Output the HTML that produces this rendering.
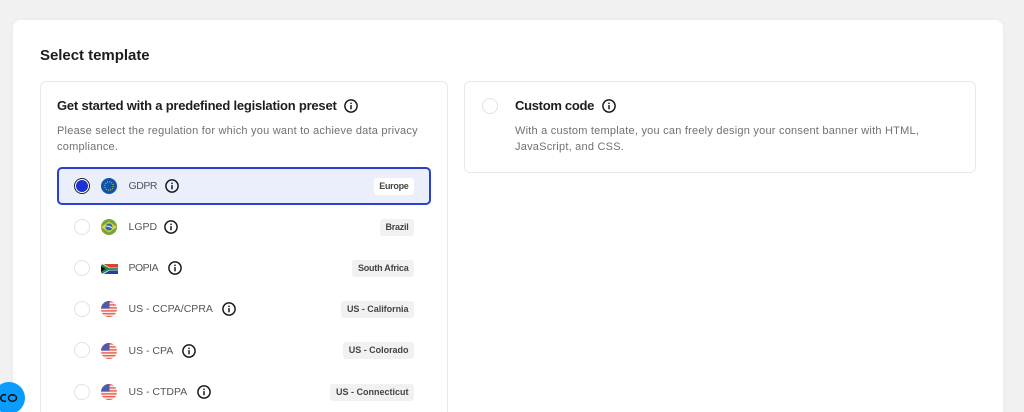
<!DOCTYPE html>
<html><head><meta charset="utf-8"><style>
html,body{margin:0;padding:0;width:1024px;height:412px;overflow:hidden;background:#f1f1f1;font-family:"Liberation Sans",sans-serif;}
#w{position:relative;width:1024px;height:412px;overflow:hidden;background:#f1f1f1}
.a{position:absolute;white-space:nowrap}
.card{left:13px;top:20px;width:990px;height:392px;background:#fff;border-radius:8px 8px 0 0;box-shadow:0 0 5px rgba(0,0,0,.035)}
.panel{background:#fff;border:1px solid #e9e9e9;border-radius:6px;box-sizing:border-box}
.h{font-size:13px;font-weight:bold;color:#1d1d1d;line-height:16px}
.p{font-size:11px;color:#717171;line-height:18px;letter-spacing:.225px}
.l{font-size:10.5px;color:#55555a;left:128.5px;line-height:14px}
.tag{right:610px;height:17px;line-height:17px;background:#f1f1f1;border-radius:3px;padding:0 5.5px;font-size:9px;font-weight:bold;color:#444}
.r{left:74px;width:16px;height:16px;border:1.5px solid #e2e2e2;border-radius:50%;box-sizing:border-box;background:#fff}
svg{position:absolute;overflow:visible}
</style></head><body><div id="w">
<svg width="0" height="0" style="position:absolute"><defs>
<symbol id="i" viewBox="0 0 14 14"><circle cx="7" cy="7" r="6.1" fill="none" stroke="#1c1c1c" stroke-width="1.5"/><rect x="6.25" y="6.1" width="1.5" height="4.2" fill="#1c1c1c"/><rect x="6.25" y="3.6" width="1.5" height="1.5" fill="#1c1c1c"/></symbol>
<clipPath id="c"><circle cx="8" cy="8" r="8"/></clipPath>
<symbol id="us" viewBox="0 0 16 16"><g clip-path="url(#c)"><rect width="16" height="16" fill="#fbe9e6"/><g fill="#e8604f"><rect y="0" width="16" height="1.6"/><rect y="3.2" width="16" height="1.4"/><rect y="6.2" width="16" height="1.4"/><rect y="9.2" width="16" height="1.4"/><rect y="12" width="16" height="1.4"/><rect y="14.8" width="16" height="1.4"/></g><rect width="8.5" height="7.6" fill="#4f5ba6"/></g></symbol>
</defs></svg>
<div class="a card"></div>
<div class="a" style="left:40px;top:47px;font-size:15px;font-weight:bold;color:#1d1d1d;line-height:18px;letter-spacing:-.03px">Select template</div>
<div class="a panel" style="left:40px;top:81px;width:408px;height:331px;border-bottom:0;border-radius:6px 6px 0 0"></div>
<div class="a panel" style="left:464px;top:81px;width:512px;height:92px"></div>

<div class="a h" style="left:57px;top:98px;letter-spacing:-.21px">Get started with a predefined legislation preset</div>
<svg style="left:344px;top:99px" width="14" height="14"><use href="#i"/></svg>
<div class="a p" style="left:57px;top:122px">Please select the regulation for which you want to achieve data privacy</div>
<div class="a p" style="left:57px;top:138px">compliance.</div>

<div class="a" style="left:57px;top:167px;width:374px;height:38px;box-sizing:border-box;background:#ebeefb;border:2px solid #2a41cf;border-radius:5px"></div>
<div class="a" style="left:74px;top:178px;width:16px;height:16px;border-radius:50%;border:1.5px solid #222;box-sizing:border-box;background:#fff"></div>
<div class="a" style="left:76px;top:180px;width:12px;height:12px;border-radius:50%;background:#1c32d6"></div>
<svg style="left:101px;top:178px" width="16" height="16" viewBox="0 0 16 16"><circle cx="8" cy="8" r="8" fill="#0d55a8"/><circle cx="8" cy="8" r="4.2" fill="none" stroke="#c9b94a" stroke-width="1.1" stroke-dasharray="1 1.2"/></svg>
<div class="a l" style="top:179px;letter-spacing:-.45px">GDPR</div>
<svg style="left:165px;top:179px" width="14" height="14"><use href="#i"/></svg>
<div class="a tag" style="top:178px;background:#fff;letter-spacing:-.3px">Europe</div>

<div class="a r" style="top:219px"></div>
<svg style="left:101px;top:219px" width="16" height="16" viewBox="0 0 16 16"><g clip-path="url(#c)"><rect width="16" height="16" fill="#6fa53a"/><path d="M0 8L8 2.5 16 8 8 13.5Z" fill="#e8cf3a"/><circle cx="8" cy="8" r="3.6" fill="#2f6aa8"/><path d="M4.6 7.2Q8 6.6 11.4 9" stroke="#e8eef5" stroke-width="1" fill="none"/></g></svg>
<div class="a l" style="top:220px">LGPD</div>
<svg style="left:164px;top:220px" width="14" height="14"><use href="#i"/></svg>
<div class="a tag" style="top:219px;letter-spacing:-.25px">Brazil</div>

<div class="a r" style="top:260px"></div>
<svg style="left:101px;top:264px" width="17" height="10" viewBox="0 0 18 11" preserveAspectRatio="none"><rect width="18" height="5.5" fill="#d9432f"/><rect y="5.5" width="18" height="5.5" fill="#2a3f9a"/><path d="M0 0L8 5.5 0 11ZM0 0h3l6 4h9v3H9l-6 4H0z" fill="#f3f3f3"/><path d="M0 1L7.5 5.5 0 10ZM1 0L8.5 4.5H18v2H8.5L1 11z" fill="#1f8a4c"/><path d="M0 2.4L4.8 5.5 0 8.6Z" fill="#111"/></svg>
<div class="a l" style="top:261px;letter-spacing:-.5px">POPIA</div>
<svg style="left:168px;top:261px" width="14" height="14"><use href="#i"/></svg>
<div class="a tag" style="top:260px;letter-spacing:-.22px">South Africa</div>

<div class="a r" style="top:301px"></div>
<svg style="left:101px;top:301px" width="16" height="16"><use href="#us"/></svg>
<div class="a l" style="top:302px">US - CCPA/CPRA</div>
<svg style="left:222px;top:302px" width="14" height="14"><use href="#i"/></svg>
<div class="a tag" style="top:301px;letter-spacing:-.03px">US - California</div>

<div class="a r" style="top:342px"></div>
<svg style="left:101px;top:342.5px" width="16" height="16"><use href="#us"/></svg>
<div class="a l" style="top:344px">US - CPA</div>
<svg style="left:182px;top:344px" width="14" height="14"><use href="#i"/></svg>
<div class="a tag" style="top:342px;letter-spacing:-.02px">US - Colorado</div>

<div class="a r" style="top:384px"></div>
<svg style="left:101px;top:384px" width="16" height="16"><use href="#us"/></svg>
<div class="a l" style="top:385px">US - CTDPA</div>
<svg style="left:197px;top:385px" width="14" height="14"><use href="#i"/></svg>
<div class="a tag" style="top:384px">US - Connecticut</div>

<div class="a r" style="left:482px;top:98px"></div>
<div class="a h" style="left:515px;top:98px;letter-spacing:-.3px">Custom code</div>
<svg style="left:602px;top:99px" width="14" height="14"><use href="#i"/></svg>
<div class="a p" style="left:515px;top:122px">With a custom template, you can freely design your consent banner with HTML,</div>
<div class="a p" style="left:515px;top:138px">JavaScript, and CSS.</div>

<svg style="left:0;top:380px;overflow:hidden" width="28" height="32" viewBox="0 0 28 32"><circle cx="9" cy="18" r="16" fill="#0a9dff"/><path d="M6 14.8H4a3.2 3.2 0 0 0 0 6.4H6" fill="none" stroke="#111" stroke-width="1.5"/><ellipse cx="12.5" cy="18" rx="4" ry="3.3" fill="none" stroke="#111" stroke-width="1.5"/></svg>
</div></body></html>
